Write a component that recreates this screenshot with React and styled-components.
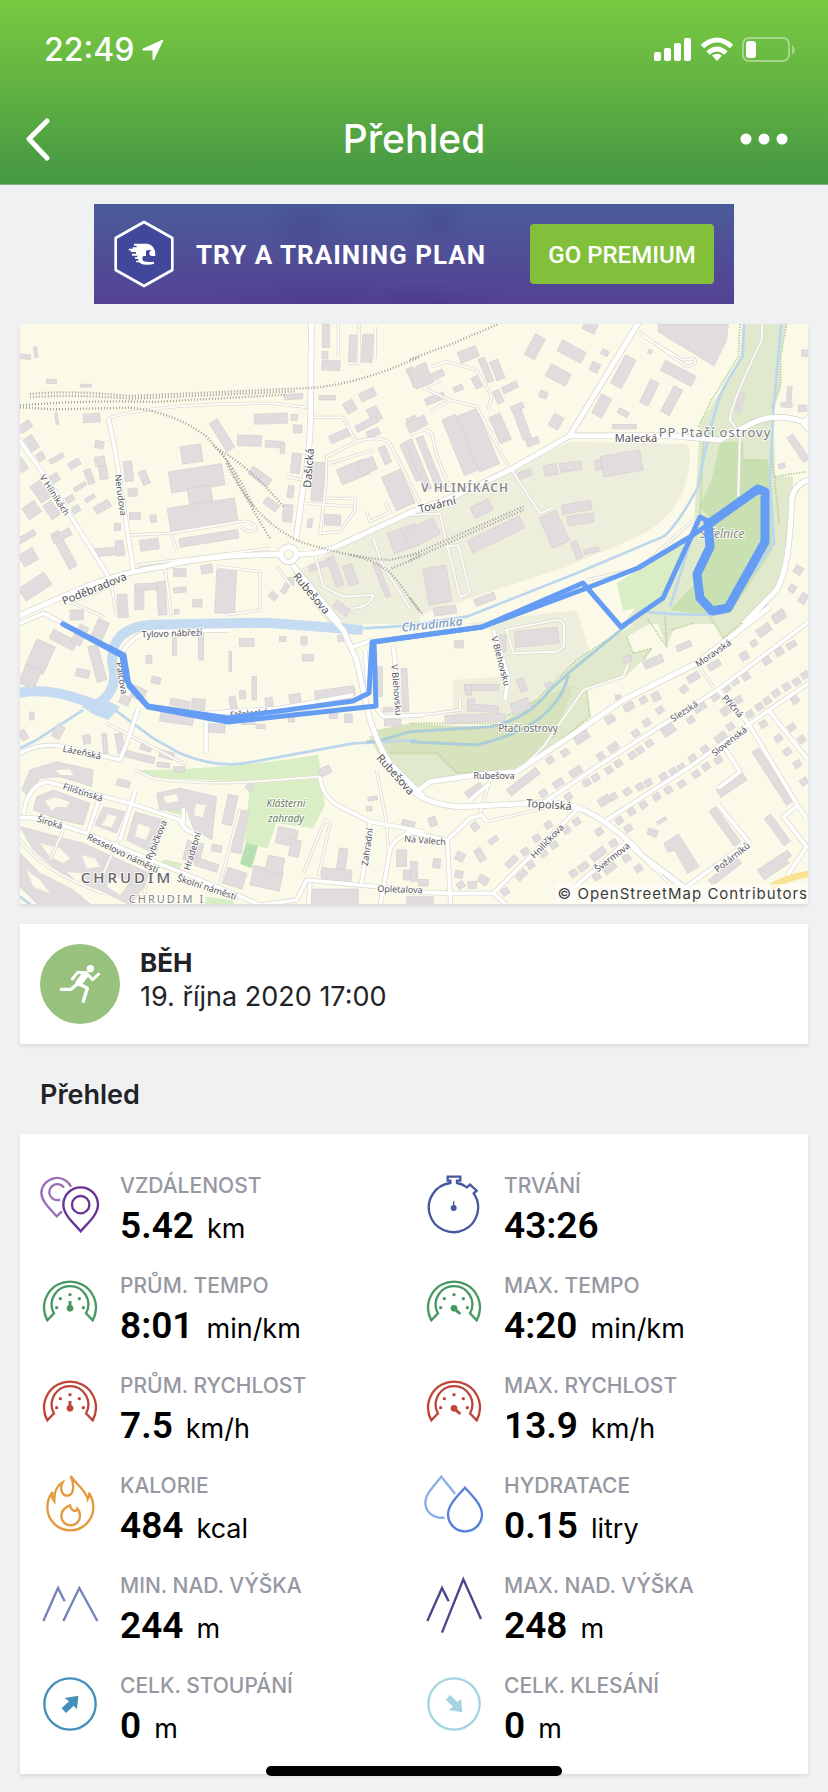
import styled, { createGlobalStyle } from "styled-components";

// The map is drawn as four tiles, each on a grid three times finer than the map
const tiles = [
  {
    id: "north-west",
    x: 0,
    y: -4,
    industrial: ["M1200 570L960 680L820 760L900 880L930 912H1200Z"],
    rails: [
      "M30 222Q150 210 330 228L850 205Q1000 200 1200 110",
      "M30 232Q150 222 330 236L830 214",
      "M0 256Q200 240 400 246L800 224",
      "M0 262L100 268L330 263Q460 275 560 350L620 420Q680 540 750 655",
      "M580 375Q640 430 700 560",
      "M600 390Q700 450 790 560",
      "M620 430Q700 600 840 665Q1000 715 1110 720L1200 700",
      "M990 705Q1080 720 1130 780L1200 875",
      "M1115 745L1200 710",
    ],
    main: [
      "M-10 890Q90 845 200 800T430 740Q560 705 780 703",
      "M830 703Q900 705 960 675L1210 560",
      "M874 0L872 290Q870 400 850 500L828 660",
      "M818 735L960 910",
      "M829 703A23 23 0 1 1 783 703A23 23 0 1 1 829 703",
    ],
    minor: ["M-5 355L90 490L265 768", "M265 295Q290 400 305 520L340 750"],
    service: [
      "M265 295Q400 250 760 250L860 262",
      "M880 292H968L1008 365L920 410L918 490L900 640L960 635L1005 570V535H920",
      "M1008 365Q1080 345 1110 370L1200 550",
      "M330 645L450 640L660 605Q700 600 708 625Q700 645 660 620",
      "M455 645L470 690",
      "M435 745L455 890",
      "M270 770L290 890",
      "M590 740L720 755V870L620 885",
      "M885 705L910 800L970 830L1060 825Q1050 860 1000 865",
      "M770 740L815 800",
      "M1060 655L1085 730L1170 865",
      "M150 850L290 790",
      "M160 850L250 890",
      "M800 470L850 480",
      "M860 550L1000 560",
      "M80 880L110 900",
      "M955 0V110",
      "M1017 10V130H985",
      "M1066 20V115",
      "M350 735L750 685",
      "M930 430L1060 390",
      "M1040 575L1050 605L1110 575L1095 545",
    ],
    shapes: [],
    buildings: [
      [918, 48, 22, 70, 0], [915, 105, 18, 22, 0], [933, 136, 54, 30, 3], [998, 85, 22, 80, 2],
      [1042, 85, 32, 84, 3], [94, 184, 30, 12, 0], [198, 197, 34, 9, 0], [15, 110, 32, 14, 5],
      [47, 97, 10, 32, -8], [820, 230, 56, 16, -4], [922, 233, 50, 14, 0], [1043, 224, 48, 26, -25],
      [990, 260, 32, 34, -28], [1063, 283, 32, 44, -28], [1040, 312, 70, 20, -27], [958, 348, 60, 24, -24],
      [1060, 339, 38, 20, -22], [753, 296, 100, 30, -2], [823, 292, 20, 18, 0], [833, 327, 26, 24, 0],
      [606, 346, 28, 100, -32], [688, 362, 72, 32, 2], [764, 373, 56, 20, 4], [788, 385, 12, 30, 5],
      [515, 402, 62, 52, -8], [530, 475, 162, 64, -9], [540, 525, 70, 50, -9], [548, 585, 204, 72, -9],
      [567, 655, 178, 26, -9], [388, 674, 56, 32, -8], [325, 454, 26, 60, -6], [373, 473, 22, 42, -24],
      [338, 517, 28, 24, -3], [345, 588, 34, 20, 0], [400, 596, 18, 22, -8], [247, 561, 50, 24, -30],
      [240, 424, 30, 28, -8], [250, 458, 24, 40, -8], [238, 374, 26, 22, 10], [215, 294, 50, 26, -4],
      [110, 296, 8, 34, -8], [828, 430, 28, 60, 6], [895, 485, 38, 116, 3], [720, 470, 70, 28, 36],
      [754, 553, 46, 24, 36], [812, 515, 18, 36, 8], [803, 580, 28, 52, 5], [870, 610, 14, 26, 8],
      [938, 600, 48, 32, 3], [1000, 455, 90, 48, -22], [1042, 437, 50, 40, -22], [1135, 510, 62, 110, -24],
      [1095, 405, 22, 54, -22], [1175, 425, 24, 120, -24], [1180, 172, 22, 62, -24], [1180, 310, 30, 40, -24],
      [1155, 655, 90, 64, -20], [992, 765, 28, 62, -20], [945, 755, 24, 90, -20], [900, 736, 70, 16, -20],
      [965, 865, 50, 24, 38], [1085, 780, 16, 110, -22], [132, 690, 26, 120, -28], [125, 648, 60, 22, -28],
      [62, 515, 36, 60, -35], [35, 570, 44, 40, -35], [95, 570, 30, 50, -35], [25, 712, 48, 40, -30],
      [20, 650, 56, 18, -30], [45, 800, 92, 44, -33], [5, 435, 24, 40, -35], [15, 320, 40, 24, -33],
      [35, 370, 28, 44, -33], [62, 410, 22, 24, -33], [110, 415, 46, 14, -30], [103, 475, 28, 24, -30],
      [163, 432, 36, 20, -30], [180, 500, 40, 12, -30], [208, 470, 20, 46, -20], [150, 537, 26, 18, -30],
      [168, 568, 24, 20, -30], [210, 535, 32, 12, -30], [293, 621, 18, 22, 0], [265, 695, 90, 24, -5],
      [300, 685, 24, 46, -8], [560, 747, 34, 26, -10], [479, 757, 38, 24, 0], [480, 810, 38, 16, -6],
      [617, 815, 60, 130, 3], [308, 858, 30, 70, -4], [358, 835, 28, 68, 0], [385, 800, 80, 20, -3],
      [425, 835, 26, 100, -4], [532, 850, 28, 22, 0], [470, 875, 14, 14, 0], [760, 828, 24, 20, 35],
      [795, 806, 16, 30, 30], [812, 784, 20, 24, 0], [170, 885, 40, 30, 0],
    ],
  },
  {
    id: "north-east",
    x: 390,
    y: -4,
    industrial: ["M480 365L830 372Q850 400 830 480Q800 600 660 660L470 740L0 895V590L300 455Z"],
    park: [
      "M1000 0H1130L1112 110V210L1085 280L1095 400V470L1150 470Q1140 700 1105 790L1010 912H640L850 640L870 310L960 170L990 110Z",
    ],
    grass: ["M930 365L905 480L868 560L905 600L865 780L780 870L880 882L960 880L1088 690L1075 420H1000V365Z"],
    meadow: ["M620 790L860 640L750 850L640 872Z"],
    stream: [
      "M1003 0L998 110Q930 210 920 260Q880 400 865 500Q800 620 760 650L500 760L170 890L0 915",
      "M1115 0L1090 270L1080 480L1092 670L940 880Q850 890 700 875",
      "M850 640L780 860",
    ],
    hedge: [
      "M990 12L985 110L905 240L865 320M880 370L870 590",
      "M1130 12L1112 110V190L1085 265M1085 400L1108 610M1095 470L1190 455",
      "M1000 420H1070",
    ],
    rails: ["M0 118L130 70L265 12", "M0 708L340 560", "M0 720L340 570", "M0 835L40 885"],
    main: [
      "M-10 582L130 530L300 450L480 347H780L930 360L1010 318Q1090 270 1195 310",
      "M480 345L690 0",
      "M1210 475Q1150 490 1145 540Q1140 740 1100 810L1000 912",
    ],
    minor: ["M1210 275L1178 310L1210 345"],
    service: [
      "M680 30L830 140Q870 130 850 115L820 120L700 50",
      "M1057 0L1055 60Q960 260 960 300L990 340L985 530",
      "M305 450L390 580L425 565",
      "M300 450L200 260L120 240L40 205L95 180",
      "M120 240L60 275",
      "M65 140L110 125L200 150L245 230L235 270",
      "M0 345Q50 320 65 340Q80 420 120 500",
      "M0 585L90 580L105 650L150 830L180 820L145 675L108 680",
      "M530 780L690 745L850 600",
    ],
    shapes: ["M745 12H955L950 60L912 138L745 35Z"],
    buildings: [
      [375, 80, 34, 70, 28], [485, 95, 80, 36, 28], [175, 103, 58, 34, -22], [445, 165, 68, 40, 28],
      [640, 155, 36, 96, 28], [805, 160, 104, 34, 28], [718, 218, 28, 76, 26], [785, 242, 30, 86, 28],
      [575, 258, 34, 64, 28], [640, 278, 34, 16, 28], [400, 224, 24, 20, 20], [438, 305, 32, 40, 28],
      [643, 320, 72, 14, 0], [555, 142, 26, 28, 28], [585, 98, 22, 16, 28], [540, 20, 40, 30, 28],
      [45, 165, 30, 68, -22], [80, 165, 44, 20, -24], [18, 175, 22, 60, -24], [262, 150, 26, 60, -22],
      [228, 150, 20, 76, -22], [300, 202, 48, 20, -26], [75, 236, 60, 20, -22], [145, 205, 28, 16, -22],
      [200, 187, 20, 36, -28], [265, 230, 20, 40, -24], [270, 325, 36, 86, -24], [205, 360, 64, 180, -22],
      [150, 375, 44, 180, -22], [335, 310, 26, 100, -20], [368, 365, 38, 20, -20], [322, 262, 38, 18, -24],
      [20, 312, 60, 30, -24], [25, 435, 22, 160, -22], [60, 430, 22, 170, -22], [345, 462, 40, 20, -18],
      [422, 450, 40, 32, -10], [482, 440, 64, 26, -8], [635, 430, 120, 62, -10], [565, 435, 18, 30, -10],
      [500, 562, 88, 28, -10], [512, 598, 80, 28, -8], [433, 628, 56, 100, -24], [500, 690, 20, 54, -22],
      [545, 692, 46, 14, -14], [215, 566, 60, 36, -26], [258, 643, 172, 40, -26], [35, 640, 100, 54, -26],
      [82, 795, 70, 110, -10], [225, 838, 64, 22, -20], [105, 872, 68, 24, -8], [990, 248, 14, 60, 14],
      [1138, 225, 14, 50, 5], [1130, 255, 34, 14, 5], [1165, 385, 22, 90, -34], [1185, 100, 20, 20, 0],
      [1178, 265, 26, 20, 0], [1115, 438, 20, 14, -15], [1165, 750, 24, 24, 30], [1147, 806, 20, 22, 30],
      [1180, 835, 22, 30, 30], [1105, 885, 40, 20, -35], [720, 95, 12, 12, 20],
    ],
  },
  {
    id: "south-west",
    x: 0,
    y: 286,
    meadow: [
      "M355 480Q600 480 895 435L903 500Q700 520 560 510L400 505Z",
      "M690 515L900 505L915 585L880 655L770 640L742 715L675 700Z",
      "M450 580L490 590L485 615L442 605Z",
      "M430 748L488 760L475 790L420 772Z",
      "M560 860L640 870V900H550Z",
    ],
    pitch: ["M678 698L714 708L695 775L660 762Z"],
    river: ["M-10 250Q60 235 150 258L230 285Q300 240 277 160Q270 50 400 44L740 38L1028 60"],
    lake: ["M185 290L225 315L265 330L300 290L240 262Z"],
    stream: [
      "M190 300L50 390L0 415",
      "M285 300L400 385L480 430Q600 480 700 455L1000 400L1190 390",
      "M1030 55L1180 46",
      "M0 860L40 890",
    ],
    main: ["M895 -20L970 60L1010 150L1045 310Q1070 400 1110 460L1210 560"],
    minor: [
      "M-10 44L70 10L130 40",
      "M300 140Q340 60 420 65L630 60",
      "M385 290L560 310L780 295L1000 255",
      "M558 330V430",
      "M355 295L320 400L300 450L130 410Q60 395 -10 435",
      "M10 615Q20 530 80 515L330 580L480 630Q490 665 530 670",
      "M-10 622L60 625L200 670L440 770L640 850L720 885L830 870L860 810L1070 830L1210 845",
      "M235 575L205 665",
      "M345 545L300 690",
      "M490 595V640",
      "M900 500Q905 560 960 590L1050 635L1210 665",
      "M1050 640L1025 820",
      "M1080 890L1110 720Q1130 670 1200 665",
      "M1120 110L1140 300",
      "M1065 290L1090 320L1210 315",
      "M1035 120L1045 240",
      "M1000 110L1060 90",
      "M870 820L865 890",
    ],
    service: [
      "M895 800L930 640L915 630L850 790",
      "M345 480L400 505Q560 525 700 515L900 500",
      "M660 600L600 820",
      "M0 690Q60 780 250 850",
      "M260 340L500 465",
      "M1070 480L1100 640L1105 720",
      "M435 620L370 860",
      "M295 690L250 790",
      "M130 660L90 750",
    ],
    shapes: [
      "M5 540L30 480L110 455L220 480L215 530L120 500L60 505L25 560Z",
      "M50 560L100 540L210 580L190 645L120 630L40 600Z",
      "M250 590L315 605L290 670L225 645Z",
      "M345 605L430 630L400 730L320 690Z",
      "M0 650L190 700L400 795L330 885L230 835L120 790L40 720Z",
      "M410 550L480 535L590 560L575 690L520 655L500 600L420 600Z",
      "M0 730L60 790L160 840L220 890H60L0 830Z",
    ],
    yards: [
      "M75 572L105 562L150 576L140 592L110 590L95 602Z",
      "M265 612L290 620L275 652L245 645Z",
      "M355 640L392 655L378 690L345 678Z",
      "M60 700L120 715L150 745L130 760L90 740Z",
      "M185 735L225 745L240 770L200 775Z",
      "M270 790L330 815L300 855L262 830Z",
      "M140 785L180 790L210 820L180 825Z",
      "M528 582L558 586L548 622L522 616Z",
      "M430 560L470 552L476 574L440 580Z",
      "M20 780L60 810L90 850L40 830Z",
      "M105 480L150 478L160 496L120 494Z",
    ],
    buildings: [
      [60, 140, 60, 90, 24], [30, 200, 50, 60, 24], [130, 90, 80, 30, 28], [180, 75, 30, 60, 28],
      [240, 60, 36, 60, 24], [232, 160, 30, 110, -15], [188, 190, 40, 24, 14], [387, 148, 18, 24, 0],
      [408, 211, 28, 20, 15], [463, 105, 12, 62, 0], [543, 105, 16, 90, 0], [631, 155, 8, 60, 0],
      [680, 97, 44, 24, 0], [788, 87, 20, 16, 0], [852, 92, 18, 26, 0], [864, 143, 34, 20, 0],
      [962, 85, 18, 20, -8], [703, 235, 14, 70, 0], [668, 254, 18, 26, 0], [640, 285, 20, 50, -8],
      [747, 276, 22, 26, -8], [825, 265, 34, 26, -8], [945, 250, 120, 30, -8], [535, 285, 40, 36, 5],
      [480, 280, 60, 20, 10], [470, 325, 100, 30, 8], [590, 355, 50, 26, 4], [685, 338, 40, 12, 0],
      [722, 350, 28, 12, 0], [815, 325, 18, 22, 0], [940, 318, 24, 16, 0], [985, 325, 24, 26, 0],
      [355, 250, 40, 36, 25], [315, 270, 30, 26, 25], [378, 412, 34, 20, 20], [440, 435, 44, 22, 14],
      [355, 440, 100, 20, 14], [430, 465, 38, 14, 6], [477, 478, 34, 16, 0], [300, 400, 22, 60, -10],
      [255, 400, 14, 60, -5], [200, 388, 22, 26, -10], [115, 365, 26, 40, 30], [10, 375, 20, 30, -30],
      [35, 318, 14, 24, 0], [1155, 240, 18, 130, -3], [1120, 298, 60, 14, -3], [1118, 338, 50, 20, 0],
      [1080, 215, 14, 90, 0], [915, 483, 36, 24, -25], [690, 531, 22, 22, 45], [310, 520, 40, 20, 14],
      [520, 725, 50, 60, 14], [590, 715, 30, 20, 10], [560, 765, 70, 24, 18], [630, 600, 30, 90, 12],
      [660, 665, 30, 130, 10], [645, 805, 60, 50, 18], [740, 805, 90, 60, 12], [765, 765, 50, 50, 12],
      [800, 680, 60, 50, 12], [825, 715, 30, 50, 12], [965, 760, 26, 90, 8], [950, 795, 90, 36, 5],
      [1165, 640, 40, 16, 14], [1145, 745, 30, 50, 0], [1170, 795, 40, 30, 0], [945, 862, 140, 50, 0],
      [1058, 565, 28, 12, -8], [1048, 596, 16, 14, 0],
    ],
  },
  {
    id: "south-east",
    x: 390,
    y: 286,
    industrial: ["M170 40L500 0L540 130L440 210L330 330H130V210L270 200L245 60Z"],
    park: [
      "M0 345L260 350L400 260L500 155L660 50L720 -10H1050L940 85L900 20L790 60L770 110L740 30L650 80L670 130L725 115L700 150L640 205L530 240L540 320L350 470L280 495L150 490L0 535L-90 440L-125 380Z",
    ],
    wood: ["M-100 360L0 340L250 355L380 270L490 225L440 380L300 490L140 490L80 430L-60 430Z"],
    creek: [
      "M730 -20L620 70L480 185L420 240Q350 330 240 350L0 365L-100 395L-130 395",
      "M475 195Q440 350 200 405L0 395",
    ],
    hedge: [
      "M0 340H250L380 270L500 150L650 50",
      "M-60 430H80L140 488L280 490M530 240L540 320L350 470",
      "M650 80L670 130L725 115L700 150M715 30L770 110L765 10M785 60L850 40M900 20L940 85L1040 0",
    ],
    highway: ["M1080 832Q1130 800 1210 790"],
    main: [
      "M-10 530Q60 590 160 590L400 578Q480 575 560 620Q640 670 700 740L820 830",
      "M20 545L60 515L200 495L320 485L480 380L640 270L860 160L1080 -10",
    ],
    minor: [
      "M400 578L560 470L930 235L1210 25",
      "M590 630L840 470L1070 305L1210 210",
      "M920 235L1015 340L1165 590L1190 625",
      "M1075 300L1195 450",
      "M935 400L990 485L925 535",
      "M925 585L1020 700",
      "M830 830L1010 700",
      "M1165 585L1120 620L1190 710L1130 800",
      "M-10 664L110 690",
      "M122 890L112 690L180 625L215 615L230 635",
      "M500 600L250 850L120 850L-10 845",
      "M250 850L290 885",
      "M650 695L450 870",
      "M250 60L295 200L285 270",
      "M180 570L240 520",
    ],
    service: [
      "M285 60L440 30Q465 30 462 60V110L440 125L310 130L290 60",
      "M340 470L400 410L520 240L640 200L655 160",
      "M240 510L210 610",
      "M860 160L910 230",
      "M0 320L150 300V265",
      "M230 635L400 595",
      "M650 700L790 830",
    ],
    shapes: ["M762 700L805 672L868 770L832 790L795 722L772 725Z"],
    buildings: [
      [380, 82, 130, 48, -6], [147, 103, 26, 22, 0], [215, 232, 104, 18, 0], [175, 240, 18, 30, 0],
      [183, 285, 22, 36, 0], [225, 295, 80, 20, 4], [195, 325, 180, 24, -2], [336, 225, 22, 40, -24],
      [332, 288, 56, 34, -22], [415, 225, 20, 14, -20], [278, 100, 20, 50, 0], [652, 147, 26, 18, -20],
      [730, 155, 60, 24, -22], [822, 108, 46, 18, -22], [1062, 60, 44, 26, -35], [1108, 22, 40, 22, -35],
      [1003, 138, 24, 24, -30], [913, 165, 40, 20, -30], [1032, 100, 20, 18, -30], [1070, 152, 24, 22, -30],
      [1108, 125, 24, 22, -30], [1145, 105, 30, 18, -30], [850, 202, 38, 22, -30], [738, 260, 24, 26, -28],
      [657, 290, 32, 22, -28], [600, 328, 28, 22, -28], [625, 262, 16, 14, 0], [515, 382, 46, 26, -32],
      [340, 515, 110, 24, -38], [192, 540, 56, 20, -35], [445, 520, 32, 20, -34], [498, 485, 38, 22, -34],
      [610, 412, 32, 22, -34], [775, 360, 40, 28, -34], [868, 290, 38, 26, -34], [583, 572, 36, 24, -34],
      [932, 382, 36, 22, -34], [965, 525, 94, 26, -34], [1088, 500, 24, 190, -33], [945, 650, 24, 130, -36],
      [1102, 660, 24, 100, -36], [1090, 770, 90, 36, -34], [945, 785, 110, 22, -38], [950, 300, 36, 24, -38],
      [305, 755, 40, 20, -44], [335, 795, 36, 20, -44], [565, 732, 48, 24, -38], [520, 770, 32, 20, -38],
      [600, 775, 40, 20, -38], [728, 668, 30, 20, 20], [755, 632, 30, 10, -30], [68, 635, 22, 28, -20],
      [10, 672, 20, 12, 10], [195, 650, 22, 24, -40], [150, 740, 26, 26, 28], [147, 793, 24, 22, 10],
      [80, 760, 22, 28, 5], [12, 785, 20, 60, 0], [40, 818, 30, 20, 0], [210, 735, 22, 40, -30],
      [250, 690, 30, 16, -35], [220, 810, 30, 24, 30], [30, 872, 80, 24, 0], [187, 825, 26, 20, 0],
    ],
    houses: [
      [822, 238], [465, 428], [420, 450], [400, 550], [572, 438], [677, 370], [710, 338], [750, 300],
      [530, 518], [557, 503], [597, 480], [625, 460], [667, 436], [690, 420], [718, 400], [842, 330],
      [915, 262], [950, 235], [975, 215], [1008, 200], [475, 560], [652, 545], [690, 530], [715, 518],
      [760, 500], [790, 485], [815, 472], [848, 445], [885, 418], [962, 350], [985, 270], [1020, 312],
      [1048, 290], [1072, 272], [1098, 250], [1130, 230], [1160, 215], [1185, 195], [628, 632], [665, 605],
      [655, 655], [700, 585], [740, 560], [775, 540], [815, 522], [858, 492], [888, 470], [925, 450],
      [1060, 342], [1105, 385], [1132, 425], [1162, 462], [1145, 352], [1175, 388], [1155, 270], [1182, 515],
      [415, 645], [380, 685], [345, 725], [400, 730], [432, 705], [470, 660], [500, 635], [362, 765],
      [285, 845], [610, 700], [490, 790], [560, 800], [650, 745], [685, 775], [568, 665], [1130, 735],
      [152, 825], [700, 270], [610, 560],
    ],
  },
];

const layers = [
  { key: "industrial", fill: "#eeeedd" },
  { key: "park", fill: "#e0e9cb" },
  { key: "wood", fill: "#d6e3bd" },
  { key: "grass", fill: "#c9e1b2" },
  { key: "meadow", fill: "#d9eec5" },
  { key: "pitch", fill: "#b8dfb1" },
  { key: "hedge", stroke: "#b3cc96", width: 5, dash: "4 4" },
  { key: "river", stroke: "#c5dbf1", width: 30 },
  { key: "lake", fill: "#c5dbf1" },
  { key: "stream", stroke: "#bcd6ee", width: 8 },
  { key: "creek", stroke: "#abced6", width: 9 },
  { key: "shapes", fill: "#e1dcdd", stroke: "#d5d0d1", width: 2 },
  { key: "yards", fill: "#fbfae8" },
  { key: "buildings" },
  { key: "service", stroke: "#dedcd3", width: 10 },
  { key: "minor", stroke: "#d9d7d0", width: 15 },
  { key: "main", stroke: "#d5d3cc", width: 19 },
  { key: "service", stroke: "#fffefa", width: 5 },
  { key: "minor", stroke: "#ffffff", width: 11 },
  { key: "main", stroke: "#ffffff", width: 15 },
  { key: "highway", stroke: "#f7e391", width: 20 },
  { key: "rails", stroke: "#a3a19b", width: 7, dash: "3 6" },
];

// text, x, y, angle, size
const streetLabels = [
  ["Poděbradova", 74, 264, -22, 11],
  ["Nerudova", 101, 171, 82, 9],
  ["V Hliníkách", 35, 171, 57, 9],
  ["Dašická", 288, 144, -86, 11],
  ["Rubešova", 292, 269, 50, 11],
  ["Tovární", 417, 180, -14, 11],
  ["Malecká", 616, 113, 0, 11],
  ["Tylovo nábřeží", 152, 309, -2, 9],
  ["Střelecká", 229, 389, -5, 9],
  ["Palcova", 102, 354, 80, 9],
  ["V Blehovsku", 377, 366, 85, 9],
  ["V Blehovsku", 481, 337, 75, 9],
  ["Lázeňská", 62, 428, 12, 9],
  ["Filištínská", 63, 468, 18, 9],
  ["Široká", 30, 498, 17, 9],
  ["Resselovo náměstí", 103, 529, 26, 9],
  ["Rybičkova", 136, 516, -68, 9],
  ["Hradební", 172, 527, -73, 9],
  ["Školní náměstí", 187, 563, 18, 9],
  ["Rubešova", 376, 450, 48, 11],
  ["Na Valech", 405, 516, 5, 9],
  ["Zahradní", 347, 523, -82, 9],
  ["Opletalova", 380, 565, 2, 9],
  ["Rubešova", 474, 451, 0, 9],
  ["Topolská", 529, 480, 4, 11],
  ["Moravská", 693, 329, -35, 9],
  ["Slezská", 664, 387, -33, 9],
  ["Příčná", 713, 382, 48, 9],
  ["Slovenská", 709, 417, -38, 9],
  ["Hniličkova", 527, 517, -46, 9],
  ["Švermova", 592, 533, -38, 9],
  ["Požárníků", 712, 533, -38, 9],
];

const PlacemarkText = styled.text`
  font-family: "Noto Sans", sans-serif;
  font-size: ${(props) => props.$size}px;
  font-style: ${(props) => (props.$italic ? "italic" : "normal")};
  font-weight: ${(props) => props.$weight || 400};
  letter-spacing: ${(props) => props.$spacing || 0}px;
  fill: ${(props) => props.$color || "#55535a"};
  stroke: rgba(255, 255, 255, 0.85);
  stroke-width: 2px;
  stroke-linejoin: round;
  paint-order: stroke;
  text-anchor: middle;
  dominant-baseline: central;
`;

function TileLayer({ tile, layer }) {
  if (layer.key === "buildings") {
    const houses = (tile.houses || []).map(([x, y]) => [x, y, 22, 20, -33]);
    return [...tile.buildings, ...houses].map(([x, y, width, height, angle], i) => (
      <rect
        key={i}
        x={x - width / 2}
        y={y - height / 2}
        width={width}
        height={height}
        fill="#e1dcdd"
        stroke="#d5d0d1"
        strokeWidth="2"
        transform={`rotate(${angle} ${x} ${y})`}
      />
    ));
  }
  return (tile[layer.key] || []).map((d) => (
    <path
      key={d}
      d={d}
      fill={layer.fill || "none"}
      stroke={layer.stroke}
      strokeWidth={layer.width}
      strokeDasharray={layer.dash}
      strokeLinejoin="round"
    />
  ));
}

function RouteMap() {
  return (
    <StyledMap viewBox="0 0 788 580" role="img" aria-label="Mapa trasy">
      <rect width="788" height="580" fill="#fbfae8" />
      {layers.map((layer, i) => (
        <g key={i}>
          {tiles.map((tile) => (
            <g key={tile.id} transform={`translate(${tile.x} ${tile.y}) scale(0.3333)`}>
              <TileLayer tile={tile} layer={layer} />
            </g>
          ))}
        </g>
      ))}
      {streetLabels.map(([text, x, y, angle, size]) => (
        <PlacemarkText key={`${text}-${x}`} x={x} y={y} $size={size} transform={`rotate(${angle} ${x} ${y})`}>
          {text}
        </PlacemarkText>
      ))}
      <PlacemarkText x="445" y="163" $size={12} $spacing={1} $weight={600} $color="#8b898e">V HLINÍKÁCH</PlacemarkText>
      <PlacemarkText x="695" y="108" $size={13} $spacing={1} $color="#77797c">PP Ptačí ostrovy</PlacemarkText>
      <PlacemarkText x="702" y="209" $size={12} $italic $color="#868b80">Střelnice</PlacemarkText>
      <PlacemarkText x="412" y="300" $size={12} $italic $weight={600} $color="#86a5c9" transform="rotate(-6 412 300)">
        Chrudimka
      </PlacemarkText>
      <PlacemarkText x="508" y="404" $size={10} $color="#6f6d70">Ptačí ostrovy</PlacemarkText>
      <PlacemarkText x="266" y="479" $size={10} $italic $color="#69805c">Klášterní</PlacemarkText>
      <PlacemarkText x="266" y="494" $size={10} $italic $color="#69805c">zahrady</PlacemarkText>
      <PlacemarkText x="107" y="553" $size={15} $spacing={3} $weight={500} $color="#666468">CHRUDIM</PlacemarkText>
      <PlacemarkText x="147" y="574" $size={11} $spacing={2} $color="#858388">CHRUDIM I</PlacemarkText>
      <g fill="none" stroke="#659cf4" strokeWidth="5" strokeLinecap="round" strokeLinejoin="round">
        <path d="M43 300L104 331L109 362L128 383L208 398L356 382L354 318L462 303L567 264L618 244L670 213L692 198L738 164" />
        <path d="M43 300L102 332L106 356L128 382L208 394L333 377L349 369L352 318L462 303L563 259L601 303L643 274L680 193L692 199" />
        <path
          strokeWidth="9"
          d="M690 199L738 165L745 168V218L708 284L692 287L680 274L677 250L690 223L688 199"
        />
      </g>
    </StyledMap>
  );
}

function Gauge({ color, high }) {
  return (
    <StyledIcon viewBox="0 0 180 180" $color={color}>
      <path d="M22 139A78 78 0 1 1 158 139L138 118A55 55 0 1 0 42 118Z" />
      <g fill={color} stroke="none">
        <circle cx="50" cy="101" r="5" />
        <circle cx="61" cy="74" r="5" />
        <circle cx="90" cy="62" r="5" />
        <circle cx="118" cy="74" r="5" />
        <circle cx="130" cy="101" r="5" />
        <circle cx="90" cy="103" r="10" />
      </g>
      <path strokeWidth="9" d={high ? "M90 103L109 120" : "M90 103V81"} />
    </StyledIcon>
  );
}

function Mountains({ color, d }) {
  return (
    <StyledIcon viewBox="0 0 180 180" $color={color}>
      <path d={d} />
    </StyledIcon>
  );
}

function RoundArrow({ color, down }) {
  return (
    <StyledIcon viewBox="0 0 180 180" $color={color}>
      <circle cx="90" cy="90" r="77" />
      <path
        fill={color}
        stroke="none"
        transform={down ? "matrix(1 0 0 -1 0 180)" : undefined}
        d="M115 65L111 106L101 95L78 117L65 103L87 82L74 72Z"
      />
    </StyledIcon>
  );
}

function Pins() {
  return (
    <StyledIcon viewBox="0 0 180 180" $color="#6a3393">
      <g stroke="#9a70b4">
        <path d="M93 38A47 47 0 0 0 4 56C4 82 30 104 50 127L66 112" />
        <path d="M72 41A24 24 0 1 0 60 77" />
      </g>
      <path d="M122 172C102 148 70 122 70 92A52 52 0 0 1 174 92C174 122 142 148 122 172Z" />
      <circle cx="122" cy="92" r="26" />
    </StyledIcon>
  );
}

function Stopwatch() {
  return (
    <StyledIcon viewBox="0 0 180 180" $color="#45579f">
      <path d="M79 27V20H71V8H109V20H99V27C112 29 121 34 129 40L138 32L158 50L149 58A74 74 0 1 1 79 27Z" />
      <circle cx="89" cy="102" r="9" fill="#45579f" stroke="none" />
      <path strokeWidth="4" d="M89 100V82" />
    </StyledIcon>
  );
}

function Flame() {
  return (
    <StyledIcon viewBox="0 0 180 180" $color="#e4993c">
      <path d="M38 54C28 66 22 82 22 100A69 69 0 0 0 160 100C160 82 154 68 147 56C148 64 147 70 143 76C138 48 108 30 92 6C104 34 102 62 84 65C66 66 58 46 68 25C52 34 42 54 43 82C36 74 35 62 38 54Z" />
      <path d="M90 94C74 100 64 112 64 126A28 28 0 0 0 120 126C120 116 116 108 112 104C110 114 94 114 90 94Z" />
    </StyledIcon>
  );
}

function Drops() {
  return (
    <StyledIcon viewBox="0 0 180 180" $color="#5480d9">
      <path stroke="#8badea" d="M93 60C82 44 62 22 52 8C34 32 4 58 4 86C4 112 26 134 62 131" />
      <path d="M123 41C105 62 72 92 72 121A51 51 0 0 0 174 121C174 92 141 62 123 41Z" />
    </StyledIcon>
  );
}

const stats = [
  { label: "VZDÁLENOST", value: "5.42", unit: "km", icon: <Pins /> },
  { label: "TRVÁNÍ", value: "43:26", icon: <Stopwatch /> },
  { label: "PRŮM. TEMPO", value: "8:01", unit: "min/km", icon: <Gauge color="#479862" /> },
  { label: "MAX. TEMPO", value: "4:20", unit: "min/km", icon: <Gauge color="#479862" high /> },
  { label: "PRŮM. RYCHLOST", value: "7.5", unit: "km/h", icon: <Gauge color="#bd463a" /> },
  { label: "MAX. RYCHLOST", value: "13.9", unit: "km/h", icon: <Gauge color="#bd463a" high /> },
  { label: "KALORIE", value: "484", unit: "kcal", icon: <Flame /> },
  { label: "HYDRATACE", value: "0.15", unit: "litry", icon: <Drops /> },
  {
    label: "MIN. NAD. VÝŠKA",
    value: "244",
    unit: "m",
    icon: <Mountains color="#7482b6" d="M10 141L54 42L74 82M70 141L118 42L172 141" />,
  },
  {
    label: "MAX. NAD. VÝŠKA",
    value: "248",
    unit: "m",
    icon: <Mountains color="#47468d" d="M10 141L54 42L74 82M54 176L118 16L171 135" />,
  },
  { label: "CELK. STOUPÁNÍ", value: "0", unit: "m", icon: <RoundArrow color="#4390ba" /> },
  { label: "CELK. KLESÁNÍ", value: "0", unit: "m", icon: <RoundArrow color="#a4d4e1" down /> },
];

export default function App() {
  return (
    <>
      <GlobalStyle />
      <StyledHeader>
        <StyledStatusBar>
          <StyledClock>
            22:49
            <svg width="22" height="22" viewBox="0 0 22 22" aria-hidden="true">
              <path d="M21 1L1 10Q0 11 1 11H10Q11 11 11 12V20Q11 22 12 20Z" fill="#fff" stroke="#fff" strokeLinejoin="round" />
            </svg>
          </StyledClock>
          <svg width="142" height="26" viewBox="0 0 142 26" aria-hidden="true">
            <g fill="#fff">
              <rect x="0" y="15" width="7" height="9" rx="2" />
              <rect x="10" y="11" width="7" height="13" rx="2" />
              <rect x="20" y="6" width="7" height="18" rx="2" />
              <rect x="30" y="1" width="7" height="23" rx="2" />
              <path d="M63 24L58 18.500Q63 15 68 18.500Z" />
              <rect x="92" y="4" width="10" height="17" rx="3" />
            </g>
            <g fill="none" stroke="#fff" strokeWidth="5">
              <path d="M54 16Q63 8 72 16" />
              <path d="M48.500 9.500Q63 -3.500 77.500 9.500" />
            </g>
            <rect x="89" y="1" width="46" height="23" rx="6" fill="none" stroke="#fff" strokeOpacity="0.4" strokeWidth="2" />
            <path d="M138 8Q141 10 141 13T138 17Z" fill="#fff" fillOpacity="0.4" />
          </svg>
        </StyledStatusBar>
        <StyledNav>
          <StyledNavButton aria-label="Zpět">
            <svg width="28" height="44" viewBox="0 0 28 44">
              <path d="M23 4L5 22L23 41" fill="none" stroke="#fff" strokeWidth="5" strokeLinecap="round" strokeLinejoin="round" />
            </svg>
          </StyledNavButton>
          <StyledTitle>Přehled</StyledTitle>
          <StyledNavButton aria-label="Další možnosti" $end>
            <svg width="48" height="12" viewBox="0 0 48 12" fill="#fff">
              <circle cx="6" cy="6" r="5.500" />
              <circle cx="24" cy="6" r="5.500" />
              <circle cx="42" cy="6" r="5.500" />
            </svg>
          </StyledNavButton>
        </StyledNav>
      </StyledHeader>

      <StyledMain>
        <StyledBanner>
          <svg width="60" height="68" viewBox="0 0 180 204" aria-hidden="true">
            <path
              d="M90 6L175 54V150L90 198L5 150V54Z"
              fill="#41479a"
              stroke="#fff"
              strokeWidth="8"
              strokeLinejoin="round"
            />
            <path
              fill="#fff"
              d="M60 71H100Q124 76 124 104V108H114Q106 108 106 100T113 91Q104 88 96 92V108H88Q82 116 88 123Q98 127 120 125V131Q112 135 96 134Q80 134 76 127H66V122H73V117H63V112H70V107H54V101H66V96H50V91H44V86H56V82H68V77H60Z"
            />
          </svg>
          <StyledBannerText>TRY A TRAINING PLAN</StyledBannerText>
          <StyledPremiumButton>GO PREMIUM</StyledPremiumButton>
        </StyledBanner>

        <StyledMapCard>
          <RouteMap />
          <StyledCredit>© OpenStreetMap Contributors</StyledCredit>
        </StyledMapCard>

        <StyledActivity>
          <StyledActivityBadge>
            <svg width="80" height="80" viewBox="0 0 240 240" aria-hidden="true">
              <circle cx="151" cy="74" r="11" fill="#fff" />
              <g fill="none" stroke="#fff" strokeWidth="9" strokeLinecap="round" strokeLinejoin="round">
                <path d="M138 86L113 85L97 105" />
                <path d="M142 90L158 107L176 90" />
                <path d="M118 120L142 133L130 172" strokeWidth="10" />
                <path d="M112 120L93 136L64 136" strokeWidth="10" />
              </g>
              <path d="M136 92L117 116" stroke="#fff" strokeWidth="21" strokeLinecap="round" />
            </svg>
          </StyledActivityBadge>
          <div>
            <StyledSport>BĚH</StyledSport>
            <StyledDate>19. října 2020 17:00</StyledDate>
          </div>
        </StyledActivity>

        <StyledSectionTitle>Přehled</StyledSectionTitle>

        <StyledStats>
          {stats.map((stat) => (
            <StyledStat key={stat.label}>
              {stat.icon}
              <div>
                <StyledLabel>{stat.label}</StyledLabel>
                <StyledValue>
                  {stat.value}
                  {stat.unit && <StyledUnit>{stat.unit}</StyledUnit>}
                </StyledValue>
              </div>
            </StyledStat>
          ))}
        </StyledStats>
      </StyledMain>
      <StyledHomeIndicator />
    </>
  );
}

const GlobalStyle = createGlobalStyle`
  * {
    box-sizing: border-box;
  }

  body {
    margin: 0;
    background-color: #eff1f3;
    color: #222327;
    font-family: Inter, sans-serif;
  }

  h1, h2, p {
    margin: 0;
  }

  svg {
    display: block;
    flex-shrink: 0;
  }
`;

const StyledHeader = styled.header`
  height: 185px;
  background: linear-gradient(#7aca41, #459743);
  border-bottom: 1px solid #8aa98b;
  color: white;
`;

const StyledStatusBar = styled.div`
  display: flex;
  align-items: center;
  justify-content: space-between;
  padding: 30px 32px 0 44px;
  height: 70px;
`;

const StyledClock = styled.div`
  display: flex;
  align-items: center;
  gap: 8px;
  font-size: 32px;
  font-weight: 500;
  line-height: 40px;
`;

const StyledNav = styled.nav`
  display: grid;
  grid-template-columns: 1fr auto 1fr;
  align-items: center;
  padding: 0 40px 0 24px;
  height: 138px;
`;

const StyledNavButton = styled.button`
  display: flex;
  justify-self: ${(props) => (props.$end ? "end" : "start")};
  padding: 0;
  border: none;
  background: none;
`;

const StyledTitle = styled.h1`
  padding-left: 16px;
  font-size: 39px;
  font-weight: 500;
  line-height: 48px;
`;

const StyledMain = styled.main`
  padding: 19px 20px 18px;
`;

const StyledBanner = styled.section`
  display: flex;
  align-items: center;
  max-width: 640px;
  height: 100px;
  margin: 0 auto 20px;
  padding: 0 20px;
  gap: 20px;
  background:
    radial-gradient(circle at 33% 20%, rgba(50, 50, 110, 0.2), transparent 9%),
    radial-gradient(ellipse at 36% 100%, rgba(60, 40, 110, 0.2), transparent 22%),
    radial-gradient(circle at 54% 15%, rgba(50, 50, 110, 0.2), transparent 8%),
    radial-gradient(ellipse at 54% 100%, rgba(60, 40, 110, 0.2), transparent 16%),
    linear-gradient(#4b5b9a, #544293);
  color: white;
`;

const StyledBannerText = styled.p`
  flex: 1;
  padding: 2px 0 0 2px;
  font-family: Roboto, sans-serif;
  font-size: 26px;
  font-weight: 700;
  letter-spacing: 1px;
  white-space: nowrap;
`;

const StyledPremiumButton = styled.button`
  width: 184px;
  height: 60px;
  padding: 2px 0 0;
  border: none;
  border-radius: 4px;
  background-color: #82bf3a;
  color: white;
  font-family: Roboto, sans-serif;
  font-size: 24px;
  font-weight: 500;
  white-space: nowrap;
`;

const StyledCard = styled.section`
  background-color: white;
  box-shadow: 0 2px 4px rgba(0, 0, 0, 0.1);
`;

const StyledMapCard = styled(StyledCard)`
  position: relative;
`;

const StyledMap = styled.svg`
  width: 100%;
  height: auto;
`;

const StyledCredit = styled.p`
  position: absolute;
  right: 0;
  bottom: 0;
  padding-left: 2px;
  background-color: rgba(255, 255, 255, 0.6);
  color: #3b3b3d;
  font-size: 15px;
  letter-spacing: 1px;
  line-height: 20px;
`;

const StyledActivity = styled(StyledCard)`
  display: flex;
  gap: 20px;
  margin-top: 20px;
  padding: 20px;
`;

const StyledActivityBadge = styled.div`
  border-radius: 50%;
  background-color: #97c17c;
`;

const StyledSport = styled.h2`
  padding-top: 2px;
  font-size: 26px;
  font-weight: 700;
  line-height: 34px;
`;

const StyledDate = styled.p`
  font-size: 27px;
  line-height: 34px;
`;

const StyledSectionTitle = styled.h2`
  padding: 36px 20px 24px;
  font-size: 27px;
  font-weight: 600;
  line-height: 30px;
`;

const StyledStats = styled(StyledCard)`
  display: grid;
  grid-template-columns: 1fr 1fr;
  gap: 20px;
  padding: 40px 20px 20px;
`;

const StyledStat = styled.div`
  display: flex;
  gap: 20px;
  height: 80px;
`;

const StyledIcon = styled.svg`
  width: 60px;
  height: 60px;
  fill: none;
  stroke: ${(props) => props.$color};
  stroke-width: 7px;
`;

const StyledLabel = styled.p`
  margin-bottom: 4px;
  color: #9698a1;
  font-size: 21px;
  font-weight: 500;
  line-height: 24px;
`;

const StyledValue = styled.p`
  color: black;
  font-family: Roboto, sans-serif;
  font-size: 37px;
  font-weight: 600;
  line-height: 48px;
`;

const StyledUnit = styled.span`
  margin-left: 13px;
  font-family: Inter, sans-serif;
  font-size: 27px;
  font-weight: 400;
`;

const StyledHomeIndicator = styled.div`
  position: fixed;
  bottom: 16px;
  left: 50%;
  width: 296px;
  height: 10px;
  margin-left: -148px;
  border-radius: 5px;
  background-color: black;
`;
